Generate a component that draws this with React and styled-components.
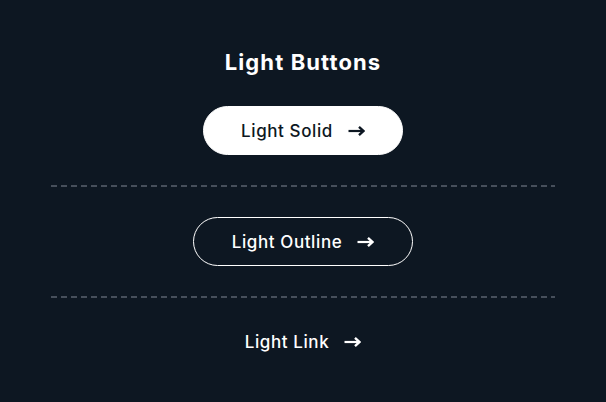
import React from 'react'
import styled, { createGlobalStyle } from 'styled-components';

const GlobalStyle = createGlobalStyle`
  html, body {
    margin: 0;
    padding: 0;
    background: #0d1722;
  }
  body {
    font-family: "Inter", "Open Sans", sans-serif;
  }
`;

function Arrow() {
  return (
    <ArrowIcon viewBox="0 0 17 12" aria-hidden="true">
      <path d="M0.5 6h14" stroke="currentColor" strokeWidth="2.2" />
      <path d="M11 1.8L15.6 6L11 10.2" fill="none" stroke="currentColor" strokeWidth="2.4" />
    </ArrowIcon>
  )
}

export default function App() {
  return (
    <>
      <GlobalStyle />
      <Panel>
        <Heading>Light Buttons</Heading>
        <Row>
          <Button variant="solid">Light Solid <Arrow /></Button>
        </Row>
        <Divider />
        <Row>
          <Button variant="outline">Light Outline <Arrow /></Button>
        </Row>
        <Divider />
        <Row>
          <Button variant="link">Light Link <Arrow /></Button>
        </Row>
      </Panel>
    </>
  )
}

const Panel = styled.main`
  box-sizing: border-box;
  width: 606px;
  height: 402px;
  padding: 49px 51px 0;
  display: flex;
  flex-direction: column;
  align-items: stretch;
`;

const Heading = styled.h2`
  margin: 0 0 31px;
  text-align: center;
  color: #ffffff;
  font-size: 22px;
  font-weight: 700;
  letter-spacing: 1.1px;
  line-height: 26px;
`;

const Row = styled.div`
  display: flex;
  justify-content: center;
`;

const Divider = styled.div`
  height: 2px;
  margin: 30px 0;
  background: repeating-linear-gradient(90deg, #464f5b 0 6px, transparent 6px 10px);
`;

const variants = {
  solid: `
    background: #ffffff;
    color: #0d1722;
    border: 1px solid #ffffff;
    width: 200px;
  `,
  outline: `
    background: transparent;
    color: #ffffff;
    border: 1px solid #ffffff;
    width: 220px;
  `,
  link: `
    background: transparent;
    color: #ffffff;
    border: 1px solid transparent;
    width: auto;
    height: 28px;
  `,
};

const Button = styled.button`
  box-sizing: border-box;
  height: 49px;
  border-radius: 999px;
  display: inline-flex;
  align-items: center;
  justify-content: center;
  gap: 15px;
  padding: 0;
  font-family: inherit;
  font-size: 17px;
  font-weight: 500;
  letter-spacing: 0.6px;
  cursor: pointer;
  ${p => variants[p.variant]}
`;

const ArrowIcon = styled.svg`
  width: 17px;
  height: 12px;
  flex-shrink: 0;
`;
